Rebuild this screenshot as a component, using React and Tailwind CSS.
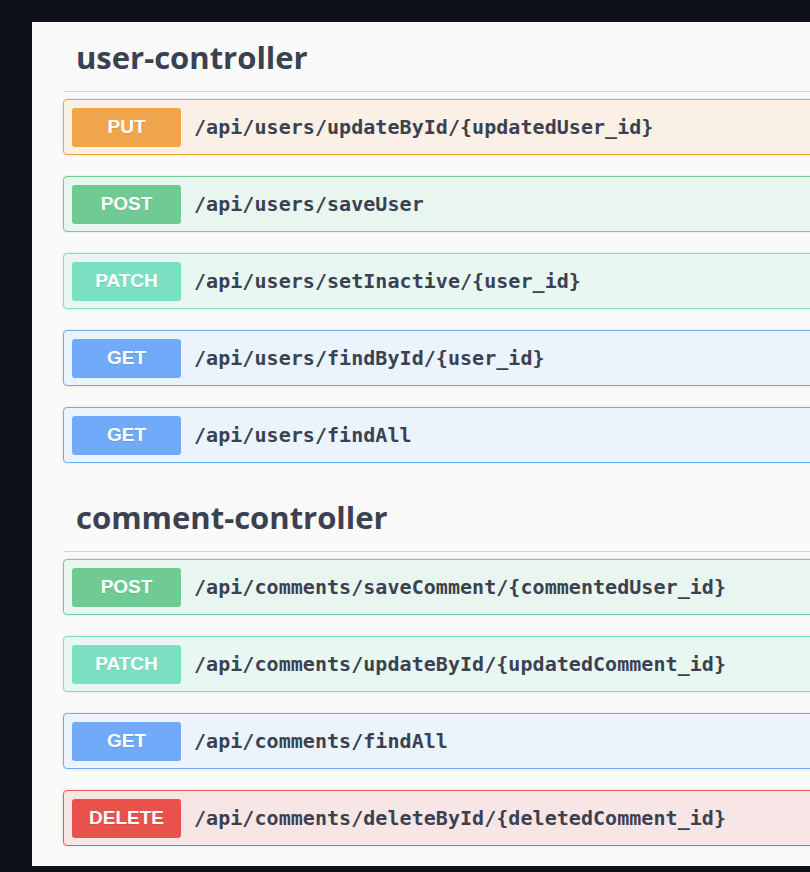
const METHOD_STYLES = {
  PUT: { row: "bg-[#faf0e5] border-[#f3a240]", badge: "bg-[#efa54b]" },
  POST: { row: "bg-[#e9f6ef] border-[#6fcf97]", badge: "bg-[#6fca94]" },
  PATCH: { row: "bg-[#e9f7f3] border-[#7ae3c3]", badge: "bg-[#7be0c1]" },
  GET: { row: "bg-[#ebf3fc] border-[#70abf9]", badge: "bg-[#70aaf8]" },
  DELETE: { row: "bg-[#f8e6e6] border-[#ec5a56]", badge: "bg-[#e8524a]" },
};

const sections = [
  {
    name: "user-controller",
    endpoints: [
      { method: "PUT", path: "/api/users/updateById/{updatedUser_id}" },
      { method: "POST", path: "/api/users/saveUser" },
      { method: "PATCH", path: "/api/users/setInactive/{user_id}" },
      { method: "GET", path: "/api/users/findById/{user_id}" },
      { method: "GET", path: "/api/users/findAll" },
    ],
  },
  {
    name: "comment-controller",
    endpoints: [
      { method: "POST", path: "/api/comments/saveComment/{commentedUser_id}" },
      { method: "PATCH", path: "/api/comments/updateById/{updatedComment_id}" },
      { method: "GET", path: "/api/comments/findAll" },
      { method: "DELETE", path: "/api/comments/deleteById/{deletedComment_id}" },
    ],
  },
];

const EndpointRow = ({ method, path }) => {
  const style = METHOD_STYLES[method];
  return (
    <div
      className={`h-[56px] flex items-center pl-[8px] border rounded-[4px] shadow-[0_0_3px_rgba(0,0,0,0.12)] ${style.row}`}
    >
      <div
        className={`w-[109px] h-[39px] flex items-center justify-center rounded-[3px] text-white text-[19px] font-bold font-['Liberation_Sans',Arial,sans-serif] [text-shadow:0_1px_0_rgba(0,0,0,0.1)] ${style.badge}`}
      >
        {method}
      </div>
      <span className="ml-[13px] text-[20px] tracking-[0.05px] font-bold text-[#3b4151] font-['DejaVu_Sans_Mono',monospace] whitespace-nowrap">
        {path}
      </span>
    </div>
  );
};

const Section = ({ name, endpoints }) => (
  <section>
    <div className="h-[55px] border-b border-[#d4d5d8] pl-[13px]">
      <h4 className="text-[31px] leading-[40px] font-bold text-[#3b4151] font-['Open_Sans',sans-serif]">
        {name}
      </h4>
    </div>
    <div className="pt-[7px] flex flex-col gap-[21px]">
      {endpoints.map((ep, i) => (
        <EndpointRow key={i} {...ep} />
      ))}
    </div>
  </section>
);

export default function App() {
  return (
    <div className="bg-[#0e1117] w-[810px] h-[872px] overflow-hidden pt-[22px] pl-[32px]">
      <div className="w-[900px] h-[844px] bg-[#fafafa] pt-[15px] pl-[31px]">
        <div className="flex flex-col gap-[34px]">
          {sections.map((s) => (
            <Section key={s.name} {...s} />
          ))}
        </div>
      </div>
    </div>
  );
}
